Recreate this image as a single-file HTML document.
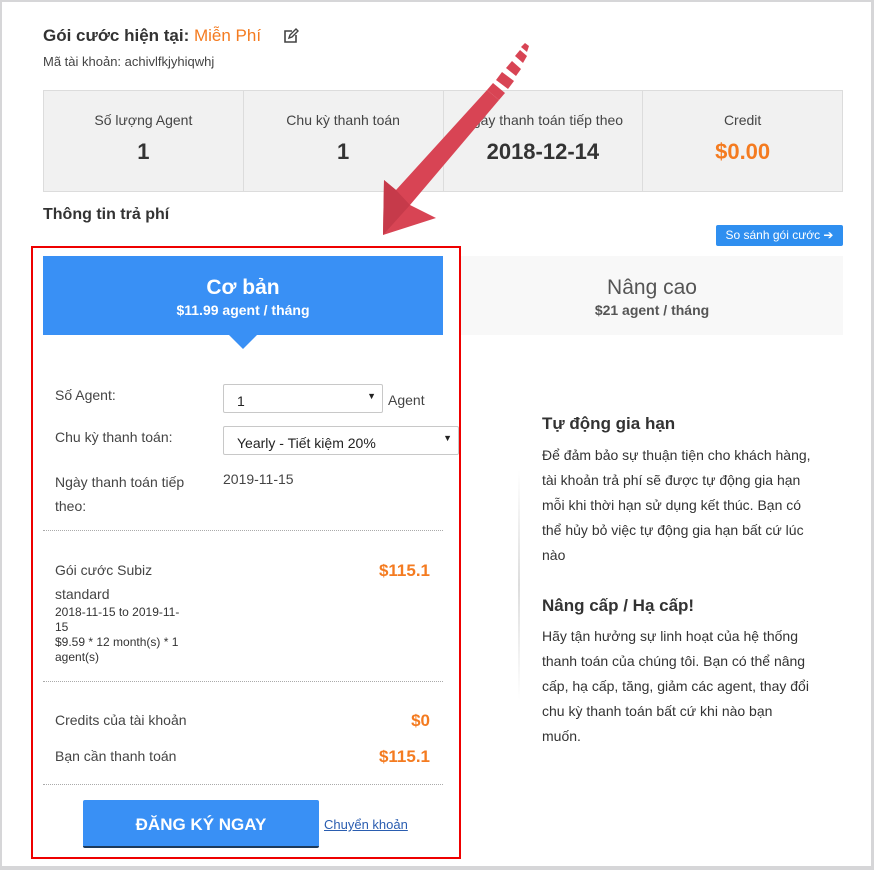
<!DOCTYPE html>
<html><head><meta charset="utf-8"><style>
*{margin:0;padding:0;box-sizing:border-box}
body{width:874px;height:870px;background:#fff;font-family:"Liberation Sans",sans-serif;color:#333;position:relative;overflow:hidden}
.a{position:absolute;white-space:nowrap}
.frame{position:absolute;left:0;top:0;width:874px;height:870px;border:2px solid #d6d6d8;border-right-width:3px;border-bottom-width:4px;pointer-events:none}
.stats{position:absolute;left:43px;top:90px;width:800px;height:102px;background:#f1f1f1;border:1px solid #dcdcdc;display:flex}
.stats div{flex:1;border-right:1px solid #dcdcdc;text-align:center}
.stats div:last-child{border-right:none}
.stats .l{font-size:14px;color:#444;margin-top:21px;border:none}
.stats .v{font-size:22px;font-weight:bold;margin-top:11px;color:#333;border:none}
.lbl{font-size:14px;color:#444}
.or{color:#f47b20;font-weight:bold;font-size:17px}
.dot{position:absolute;left:43px;width:400px;border-top:1px dotted #aaa}
.sel{position:absolute;border:1px solid #c8c8c8;border-radius:2px;background:#fff;font-size:14px;color:#222;padding:8px 0 0 13px}
.sel:after{content:"▼";position:absolute;right:6px;top:6px;font-size:9px}
.p{font-size:14px;line-height:25px;color:#333}
</style></head><body>
<div class="a" style="left:43px;top:26px;font-size:17px;font-weight:bold;color:#333">Gói cước hiện tại: <span style="color:#f47b20;font-weight:normal">Miễn Phí</span></div>
<svg class="a" style="left:283px;top:28px" width="16" height="16" viewBox="0 0 16 16"><path d="M9 3H2v11h11V7" fill="none" stroke="#444" stroke-width="1.6"/><path d="M6 10l1-3 6-6 2 2-6 6z" fill="none" stroke="#444" stroke-width="1.4"/></svg>
<div class="a" style="left:43px;top:54px;font-size:13px;color:#444">Mã tài khoản: achivlfkjyhiqwhj</div>
<div class="stats">
<div><div class="l">Số lượng Agent</div><div class="v">1</div></div>
<div><div class="l">Chu kỳ thanh toán</div><div class="v">1</div></div>
<div><div class="l">Ngày thanh toán tiếp theo</div><div class="v">2018-12-14</div></div>
<div><div class="l">Credit</div><div class="v" style="color:#f47b20">$0.00</div></div>
</div>
<div class="a" style="left:43px;top:206px;font-size:16px;font-weight:bold;color:#333">Thông tin trả phí</div>
<div class="a" style="left:716px;top:225px;width:127px;height:21px;background:#2f8ff0;border-radius:2px;color:#fff;font-size:12px;text-align:center;line-height:21px">So sánh gói cước ➔</div>

<div class="a" style="left:461px;top:256px;width:382px;height:79px;background:#f8f8f8;text-align:center;color:#555">
<div style="font-size:21px;margin-top:20px">Nâng cao</div><div style="font-size:14px;font-weight:bold;margin-top:2px">$21 agent / tháng</div></div>
<div class="a" style="left:43px;top:256px;width:400px;height:79px;background:#3990f5;text-align:center;color:#fff">
<div style="font-size:21px;font-weight:bold;margin-top:20px">Cơ bản</div><div style="font-size:14px;font-weight:bold;margin-top:2px">$11.99 agent / tháng</div></div>
<div class="a" style="left:229px;top:335px;width:0;height:0;border-left:14px solid transparent;border-right:14px solid transparent;border-top:14px solid #3990f5"></div>

<div class="a lbl" style="left:55px;top:387px">Số Agent:</div>
<div class="sel" style="left:223px;top:384px;width:160px;height:29px">1</div>
<div class="a lbl" style="left:388px;top:392px">Agent</div>
<div class="a lbl" style="left:55px;top:429px">Chu kỳ thanh toán:</div>
<div class="sel" style="left:223px;top:426px;width:236px;height:29px">Yearly - Tiết kiệm 20%</div>
<div class="a lbl" style="left:55px;top:470px;line-height:24px;white-space:normal;width:150px">Ngày thanh toán tiếp theo:</div>
<div class="a lbl" style="left:223px;top:471px">2019-11-15</div>
<div class="dot" style="top:530px"></div>
<div class="a lbl" style="left:55px;top:558px;line-height:24px">Gói cước Subiz<br>standard</div>
<div class="a" style="left:55px;top:605px;font-size:12px;line-height:15px;color:#333">2018-11-15 to 2019-11-<br>15<br>$9.59 * 12 month(s) * 1<br>agent(s)</div>
<div class="a or" style="right:444px;top:561px">$115.1</div>
<div class="dot" style="top:681px"></div>
<div class="a lbl" style="left:55px;top:712px">Credits của tài khoản</div>
<div class="a or" style="right:444px;top:711px">$0</div>
<div class="a lbl" style="left:55px;top:748px">Bạn cần thanh toán</div>
<div class="a or" style="right:444px;top:747px">$115.1</div>
<div class="dot" style="top:784px"></div>
<div class="a" style="left:83px;top:800px;width:236px;height:48px;background:#3990f5;border-bottom:2px solid #1d3a5a;border-radius:2px;color:#fff;font-size:17px;font-weight:bold;text-align:center;line-height:49px">ĐĂNG KÝ NGAY</div>
<div class="a" style="left:324px;top:817px;font-size:13px;color:#2a5db0;text-decoration:underline">Chuyển khoản</div>

<div class="a" style="left:31px;top:246px;width:430px;height:613px;border:2px solid #e00"></div>

<div class="a" style="left:518px;top:470px;width:2px;height:230px;background:linear-gradient(#fff,#ddd,#fff)"></div>
<div class="a" style="left:542px;top:414px;font-size:17px;font-weight:bold;color:#333">Tự động gia hạn</div>
<div class="a p" style="left:542px;top:443px">Để đảm bảo sự thuận tiện cho khách hàng,<br>tài khoản trả phí sẽ được tự động gia hạn<br>mỗi khi thời hạn sử dụng kết thúc. Bạn có<br>thể hủy bỏ việc tự động gia hạn bất cứ lúc<br>nào</div>
<div class="a" style="left:542px;top:596px;font-size:17px;font-weight:bold;color:#333">Nâng cấp / Hạ cấp!</div>
<div class="a p" style="left:542px;top:624px">Hãy tận hưởng sự linh hoạt của hệ thống<br>thanh toán của chúng tôi. Bạn có thể nâng<br>cấp, hạ cấp, tăng, giảm các agent, thay đổi<br>chu kỳ thanh toán bất cứ khi nào bạn<br>muốn.</div>

<svg class="a" style="left:0;top:0" width="874" height="870">
<polygon points="383,235 384,180 396,190 487,90 499,100 410,205 436,218" fill="#d84454"/>
<polygon points="487,90 499,100 505,93 493,83" fill="#d84454"/>
<polygon points="496,80 508,89 514,81 502,72" fill="#d84454"/>
<polygon points="506,68 516,76 521,69 512,61" fill="#d84454"/>
<polygon points="515,56 523,63 527,56 520,50" fill="#d84454"/>
<polygon points="521,47 527,52 529,46 525,43" fill="#d84454"/>
<polygon points="383,235 384,180 396,190 410,205" fill="#c63a4a"/>
</svg>
<div class="frame"></div>
</body></html>
